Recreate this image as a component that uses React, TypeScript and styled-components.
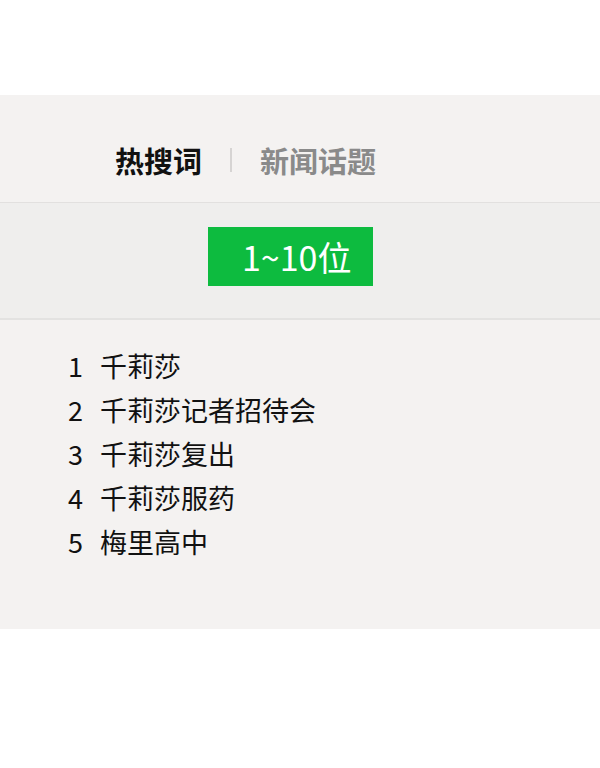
import React, { useState } from "react";
import styled, { createGlobalStyle } from "styled-components";

const GlobalStyle = createGlobalStyle`
  body {
    margin: 0;
    background: #ffffff;
    font-family: "Noto Sans CJK SC", "Noto Sans", sans-serif;
  }
`;

const Page = styled.div`
  padding-top: 95px;
`;

const Panel = styled.section`
  background: #f4f2f1;
  padding-bottom: 66px;
`;

const Tabs = styled.nav`
  display: flex;
  align-items: center;
  padding: 45px 0 22px 115px;
  border-bottom: 1px solid #e2e0df;
`;

const Tab = styled.button<{ active: boolean }>`
  border: 0;
  background: none;
  padding: 0;
  font-family: inherit;
  font-size: 29px;
  line-height: 40px;
  font-weight: 700;
  color: ${(p) => (p.active ? "#111111" : "#8a8a8a")};
  cursor: pointer;
`;

const Divider = styled.span`
  width: 2px;
  height: 24px;
  margin: 0 28px;
  background: #d6d4d3;
`;

const RangeBar = styled.div`
  background: #efeeed;
  padding: 24px 0 32px 208px;
  border-bottom: 2px solid #e3e2e1;
`;

const RangeButton = styled.button`
  display: flex;
  align-items: center;
  width: 165px;
  height: 59px;
  border: 0;
  padding: 0 0 0 34px;
  background: #0dbb3f;
  color: #ffffff;
  font-family: inherit;
  font-size: 34px;
  cursor: pointer;
`;

const List = styled.ol`
  list-style: none;
  margin: 0;
  padding: 23px 0 0 68px;
`;

const Item = styled.li`
  display: flex;
  align-items: center;
  height: 44px;
  font-size: 27px;
  color: #111111;
`;

const Rank = styled.span`
  width: 32px;
`;

const words = ["千莉莎", "千莉莎记者招待会", "千莉莎复出", "千莉莎服药", "梅里高中"];

export default function App() {
  const [tab, setTab] = useState("hot");

  return (
    <Page>
      <GlobalStyle />
      <Panel>
        <Tabs>
          <Tab active={tab === "hot"} onClick={() => setTab("hot")}>
            热搜词
          </Tab>
          <Divider />
          <Tab active={tab === "news"} onClick={() => setTab("news")}>
            新闻话题
          </Tab>
        </Tabs>
        <RangeBar>
          <RangeButton>1~10位</RangeButton>
        </RangeBar>
        <List>
          {words.map((w, i) => (
            <Item key={w}>
              <Rank>{i + 1}</Rank>
              {w}
            </Item>
          ))}
        </List>
      </Panel>
    </Page>
  );
}
